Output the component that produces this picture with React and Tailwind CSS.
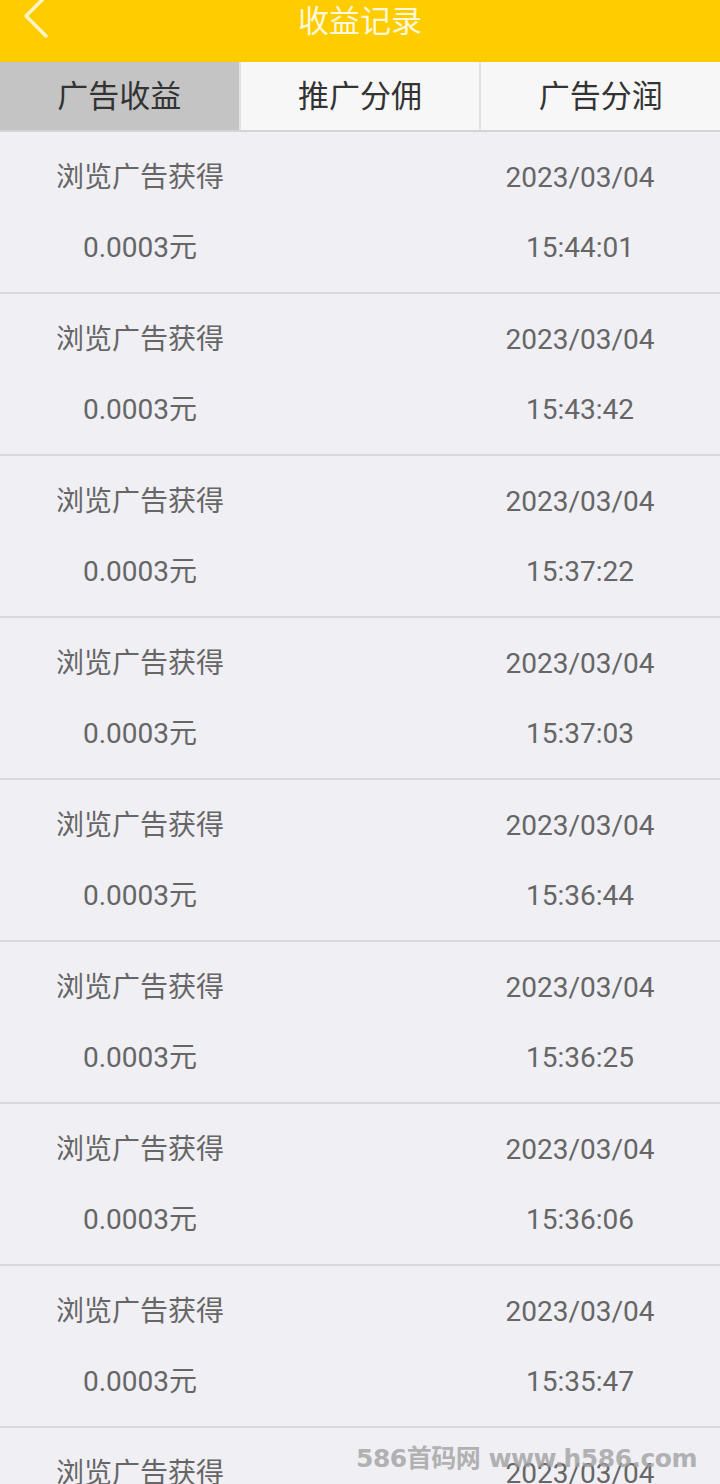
import React, { useState } from "react";

const records = [
  "15:44:01",
  "15:43:42",
  "15:37:22",
  "15:37:03",
  "15:36:44",
  "15:36:25",
  "15:36:06",
  "15:35:47",
  "15:35:28",
];

const tabs = ["广告收益", "推广分佣", "广告分润"];

const RecordRow = ({ time }) => (
  <div className="flex justify-between border-b-2 border-[#d8d8dc] pt-[11px] pb-[9px] text-[28px] text-[#666666]">
    <div className="w-[280px] text-center">
      <div className="h-[70px] leading-[70px]">浏览广告获得</div>
      <div className="h-[70px] leading-[70px]">0.0003元</div>
    </div>
    <div className="w-[280px] text-center">
      <div className="h-[70px] leading-[70px]">2023/03/04</div>
      <div className="h-[70px] leading-[70px]">{time}</div>
    </div>
  </div>
);

const App = () => {
  const [activeTab, setActiveTab] = useState(0);

  return (
    <div className="relative h-[1484px] overflow-hidden bg-[#efeff4] font-['Roboto','Noto_Sans_CJK_SC',sans-serif]">
      {/* header */}
      <div className="relative flex h-[62px] justify-center bg-[#ffcc00]">
        <button className="absolute left-[20px] top-[-4px] p-0">
          <svg width="34" height="44" viewBox="0 0 34 44" fill="none">
            <path
              d="M24 2 L6 20 L26 40"
              stroke="#fff5c4"
              strokeWidth="3.5"
              strokeLinecap="round"
              strokeLinejoin="round"
            />
          </svg>
        </button>
        <h1 className="pt-[1px] text-[31px] leading-[42px] text-[#fff8dc]">收益记录</h1>
      </div>

      {/* tabs */}
      <div className="flex h-[70px] border-b-2 border-[#d4d4d6]">
        {tabs.map((tab, i) => (
          <button
            key={tab}
            onClick={() => setActiveTab(i)}
            className={
              "flex-1 pt-[3px] text-[31px] text-[#333333] " +
              (i > 0 ? "border-l-2 border-[#e2e2e2] " : "") +
              (activeTab === i ? "bg-[#c4c4c4]" : "bg-[#f7f7f7]")
            }
          >
            {tab}
          </button>
        ))}
      </div>

      {records.map((time, i) => (
        <RecordRow key={i} time={time} />
      ))}

      {/* watermark */}
      <div className="absolute left-[356px] top-[1440px] whitespace-nowrap text-[25px] font-bold tracking-[-0.5px] text-[#a0a0a0]/80 font-['DejaVu_Sans','Noto_Sans_CJK_SC',sans-serif]">
        586首码网 www.h586.com
      </div>
    </div>
  );
};

export default App;
